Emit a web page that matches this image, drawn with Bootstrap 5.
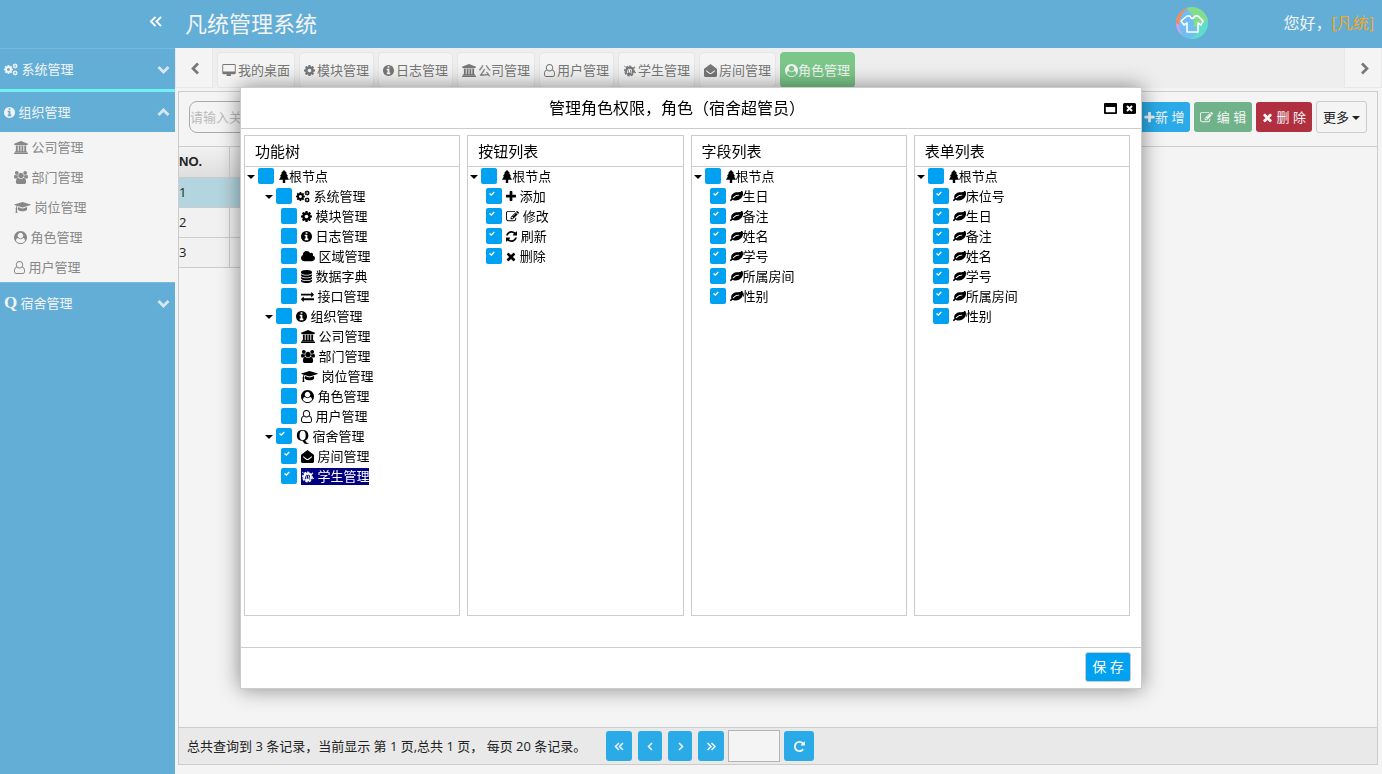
<!DOCTYPE html>
<html lang="zh-CN">
<head>
<meta charset="utf-8">
<meta name="viewport" content="width=device-width, initial-scale=1">
<title>凡统管理系统</title>
<link href="https://cdn.jsdelivr.net/npm/bootstrap@5.3.0/dist/css/bootstrap.min.css" rel="stylesheet">
<style>
body{font-family:"Open Sans","Noto Sans CJK SC",sans-serif;font-size:13px;line-height:20px;color:#222;background:#f4f4f4;overflow:hidden}
a{color:inherit;text-decoration:none}
.btn,.form-control{font-size:13px;line-height:20px}
.ic{height:13px;width:13px;fill:currentColor;vertical-align:-2px;flex:none;overflow:visible}
.i-9{width:10px}.i-11{width:11px}.i-14{width:14px}.i-17{width:17px}
.ln{fill:none;stroke:currentColor}
.q-mark{font:bold 17px/13px "Liberation Serif",serif}
.topbar{height:48px;padding-bottom:2px;background:#62aed6;color:#f4f4f4}
.brand-text{font-size:22px;padding-left:10px}
.side{width:175px;flex:none;background:#62aed6}
.side-head{height:41px;color:#f4f4f4;border-top:1px solid #74b9de;padding:0 5px 0 4px}
.side-head .ln{opacity:.8}
.side-head.active{border-top:3px solid #73f1f0;height:43px}
.side-list{background:#f4f4f4;color:#888}
.side-list a{display:block;line-height:30px;padding-left:14px}
.tabbar{height:40px;background:#eee;color:#777}
.arrow-btn{width:38px;border:1px solid #e8e8e8;border-width:0 1px 1px;background:#f4f4f4;color:#777;padding:0}
.tab-link{border:1px solid #e6e6e6;border-radius:4px;background:#f4f4f4;padding:0 4px;line-height:34px;white-space:nowrap}
.tab-link:not(.active) .ic{margin-right:2px}
.tab-link.active{background:#7ac789;border-color:#7ac789;color:#f4f4f4}
.panel{border:1px solid #ccc;background:#f4f4f4;margin:3px 4px 9px 3px}
.tools{border-bottom:1px solid #ccc;height:55px;padding:0 10px 4px}
.tools .form-control{width:200px;height:32px;padding:0;border:1px solid #aaa;border-radius:8px;background:transparent}
.form-control::placeholder{color:#bbb}
.tool-btn{height:30px;padding:0 6px;border:0;border-radius:3px;color:#f4f4f4}
.c-blue,.c-blue:hover{background:#2aabe8;color:#f4f4f4}
.c-green{background:#70b28a}.c-red{background:#b03040}
.more{height:32px;border:1px solid #ccc;color:#222}
.grid-table{width:60%;margin:0}
.grid-table th,.grid-table td{height:30px;padding:0;border:1px solid #ccc;border-width:0 1px 1px 0;background:#f1f1f1;color:#222;box-shadow:none;vertical-align:middle}
.grid-table th{font-family:"Liberation Sans",sans-serif;background:linear-gradient(#f2f2f2,#dedede)}
.grid-table .picked td{background:#b2d5df}
.no-col{width:50px}
.pager{height:37px;background:#e9e9e9;border-top:1px solid #ccc;padding-left:8px}
.pager-text{margin-right:20px}
.pager-btns{gap:6px}
.pager .tool-btn{width:26px;padding:0}
.pager .form-control{width:52px;height:32px;border:1px solid #b4b4b4;border-radius:0;background:#f4f4f4}
.pager .narrow{width:24px}.pager .wide{width:30px}
.modal{padding-top:2px}
.modal-dialog{max-width:902px;margin:0 auto;min-height:100%}
.modal-content{border:1px solid #ccc;border-radius:0;box-shadow:0 0 20px rgba(0,0,0,.45);color:#000}
.modal-header{height:41px;padding:0 5px;border-color:#ccc;border-radius:0}
.modal-title{font-size:16px;font-weight:400;line-height:24px}
.win-btns{gap:6px}
.win-btn{padding:0;border:0;background:none;line-height:0}
.win-btn .ic{height:11px}
.modal-body{padding:6px 11px 31px 3px;gap:7px}
.tree-box{border:1px solid #ccc;min-height:481px;flex:1 1 0}
.tree-box h2{font-size:15px;font-weight:400;line-height:30px;margin:0;padding-left:10px;border-bottom:1px solid #ccc;height:31px}
.tree-box ul{list-style:none;margin:0;padding:0}
.tree-box ul ul{padding-left:18px}
.node{display:flex;height:20px;align-items:center;white-space:pre}
.node label{line-height:17px;margin-bottom:2px}
.twist{width:13px;height:20px;padding:0 0 0 2px;border:0;background:none;display:flex;align-items:center}
.twist::before,.caret-dn::after{content:"";border:4px solid transparent;border-top-color:#000;border-bottom:0}
.caret-dn::after{display:inline-block;border-top-color:#222;margin-left:3px;vertical-align:2px}
.node input{appearance:none;width:16px;height:16px;margin:0 4px 2px 0;border-radius:2px;background:#00a1f0;flex:none}
.node input.top-node{margin-right:5px}
.node input:checked{background:#00a1f0 url("data:image/svg+xml,%3Csvg xmlns='http://www.w3.org/2000/svg' width='16' height='16' viewBox='0 0 16 16'%3E%3Cpath d='M3.500 5.500l1.800 1.600 3-3' fill='none' stroke='white' stroke-width='1.400'/%3E%3C/svg%3E")}
.chosen{background:#000080;color:#fff;--hole:#000080}
.modal-footer{height:41px;padding:0 10px 2px;border-color:#ccc;border-radius:0}
.modal-footer>*{margin:0}
.save{height:30px;width:46px;padding:0;font-size:14px;border:1px solid #ccc;border-radius:3px;background:#00a1f0;color:#fff}
</style>
</head>
<body>
<svg class="d-none">
<symbol id="cog" viewBox="128 0 1536 1792"><path id="gear" d="M1152 896q0-106-75-181t-181-75-181 75-75 181 75 181 181 75 181-75 75-181zm512-109v222q0 12-8 23t-20 13l-185 28q-19 54-39 91 35 50 107 138 10 12 10 25t-9 23q-27 37-99 108t-94 71q-12 0-26-9l-138-108q-44 23-91 38-16 136-29 186-7 28-36 28h-222q-14 0-24.5-8.5t-11.5-21.5l-28-184q-49-16-90-37l-141 107q-10 9-25 9-14 0-25-11-126-114-165-168-7-10-7-23 0-12 8-23 15-21 51-66.500t54-70.500q-27-50-41-99l-183-27q-13-2-21-12.500t-8-23.500v-222q0-12 8-23t19-13l186-28q14-46 39-92-40-57-107-138-10-12-10-24 0-10 9-23 26-36 98.500-107.500t94.500-71.500q13 0 26 10l138 107q44-23 91-38 16-136 29-186 7-28 36-28h222q14 0 24.500 8.500t11.500 21.500l28 184q49 16 90 37l142-107q9-9 24-9 13 0 25 10 129 119 165 170 7 8 7 22 0 12-8 23-15 21-51 66.500t-54 70.500q26 50 41 98l183 28q13 2 21 12.500t8 23.500z"/></symbol>
<symbol id="cogs" viewBox="0 0 1920 1792"><use href="#gear" transform="translate(-110 180) scale(.8)"/><use href="#gear" transform="translate(1120 0) scale(.46)"/><use href="#gear" transform="translate(1120 960) scale(.46)"/></symbol>
<symbol id="info" viewBox="128 0 1536 1792"><path d="M1152 1376v-160q0-14-9-23t-23-9h-96v-512q0-14-9-23t-23-9h-320q-14 0-23 9t-9 23v160q0 14 9 23t23 9h96v320h-96q-14 0-23 9t-9 23v160q0 14 9 23t23 9h448q14 0 23-9t9-23zm-128-896v-160q0-14-9-23t-23-9h-192q-14 0-23 9t-9 23v160q0 14 9 23t23 9h192q14 0 23-9t9-23zm640 416q0 209-103 385.500t-279.500 279.500-385.500 103-385.500-103-279.500-279.500-103-385.500 103-385.500 279.500-279.500 385.500-103 385.500 103 279.500 279.500 103 385.500z"/></symbol>
<symbol id="bank" viewBox="0 0 1920 1792"><path d="M960 0l960 384v128h-128q0 26-20.500 45t-48.500 19h-1526q-28 0-48.500-19t-20.500-45h-128v-128zm-704 640h256v768h128v-768h256v768h128v-768h256v768h128v-768h256v768h59q28 0 48.500 19t20.500 45v64h-1664v-64q0-26 20.500-45t48.500-19h59v-768zm1595 960q28 0 48.500 19t20.500 45v128h-1920v-128q0-26 20.500-45t48.500-19h1782z"/></symbol>
<symbol id="users" viewBox="0 0 1920 1792"><path d="M593 896q-162 5-265 128h-134q-82 0-138-40.500t-56-118.500q0-353 124-353 6 0 43.500 21t97.500 42.500 119 21.500q67 0 133-23-5 37-5 66 0 139 81 256zm1071 637q0 120-73 189.500t-194 69.500h-874q-121 0-194-69.500t-73-189.500q0-53 3.500-103.500t14-109 26.500-108.500 43-97.500 62-81 85.500-53.500 111.500-20q10 0 43 21.500t73 48 107 48 135 21.500 135-21.500 107-48 73-48 43-21.500q61 0 111.500 20t85.500 53.500 62 81 43 97.500 26.500 108.500 14 109 3.500 103.500zm-1024-1277q0 106-75 181t-181 75-181-75-75-181 75-181 181-75 181 75 75 181zm704 384q0 159-112.500 271.500t-271.500 112.500-271.500-112.500-112.500-271.500 112.500-271.500 271.500-112.500 271.500 112.500 112.500 271.500zm576 225q0 78-56 118.500t-138 40.500h-134q-103-123-265-128 81-117 81-256 0-29-5-66 66 23 133 23 59 0 119-21.500t97.500-42.500 43.500-21q124 0 124 353zm-128-609q0 106-75 181t-181 75-181-75-75-181 75-181 181-75 181 75 75 181z"/></symbol>
<symbol id="cap" viewBox="0 0 2304 1792"><path d="M1774 836l18 316q4 69-82 128t-235 93.500-323 34.500-323-34.500-235-93.500-82-128l18-316 574 181q22 7 48 7t48-7zm530-324q0 23-22 31l-1120 352q-4 1-10 1t-10-1l-652-206q-43 34-71 111.500t-34 178.500q63 36 63 109 0 69-58 107l58 433q2 14-8 25-9 11-24 11h-192q-15 0-24-11-10-11-8-25l58-433q-58-38-58-107 0-73 65-111 11-207 98-330l-333-104q-22-8-22-31t22-31l1120-352q4-1 10-1t10 1l1120 352q22 8 22 31z"/></symbol>
<symbol id="ucircle" viewBox="0 0 1792 1792"><path d="M1523 1339q-22-155-87.500-257.500t-184.500-118.500q-67 74-159.500 115.500t-195.500 41.500-195.500-41.500-159.500-115.500q-119 16-184.500 118.500t-87.500 257.500q106 150 271 237.500t356 87.500 356-87.500 271-237.500zm-243-699q0-159-112.500-271.500t-271.500-112.500-271.500 112.500-112.500 271.500 112.500 271.500 271.500 112.500 271.500-112.500 112.500-271.500zm512 256q0 182-71 347.500t-190.500 286-285.500 191.500-349 71q-182 0-348-71t-286-191-191-286-71-348 71-348 191-286 286-191 348-71 348 71 286 191 191 286 71 348z"/></symbol>
<symbol id="usero" viewBox="0 0 1536 1792"><path d="M1201 784q47 14 89.500 38t89 73 79.500 115.500 55 172 22 236.500q0 154-100 263.500t-241 109.500h-854q-141 0-241-109.500t-100-263.500q0-131 22-236.500t55-172 79.500-115.500 89-73 89.500-38q-79-125-79-272 0-104 40.500-198.500t109.500-163.500 163.500-109.500 198.500-40.500 198.500 40.500 163.500 109.500 109.500 163.500 40.500 198.500q0 147-79 272zm-433-656q-159 0-271.500 112.500t-112.500 271.500 112.500 271.500 271.500 112.500 271.500-112.500 112.500-271.500-112.500-271.500-271.500-112.500zm427 1536q88 0 150.500-71.500t62.500-173.500q0-239-78.500-377t-225.500-145q-145 127-336 127t-336-127q-147 7-225.500 145t-78.500 377q0 102 62.500 173.500t150.500 71.500h854z"/></symbol>
<symbol id="cloud" viewBox="0 0 1920 1792"><path d="M1920 1152q0 159-112.500 271.500t-271.500 112.500h-1088q-185 0-316.500-131.500t-131.500-316.500q0-132 71-241.500t187-163.500q-2-28-2-43 0-212 150-362t362-150q158 0 286.500 88t187.500 230q70-62 166-62 106 0 181 75t75 181q0 75-41 138 129 30 213 134.500t84 239.500z"/></symbol>
<symbol id="db" viewBox="0 0 1536 1792"><path d="M768 768q237 0 443-43t325-127v170q0 69-103 128t-280 93.500-385 34.500-385-34.500-280-93.500-103-128v-170q119 84 325 127t443 43zm0 768q237 0 443-43t325-127v170q0 69-103 128t-280 93.500-385 34.500-385-34.500-280-93.500-103-128v-170q119 84 325 127t443 43zm0-384q237 0 443-43t325-127v170q0 69-103 128t-280 93.500-385 34.500-385-34.500-280-93.500-103-128v-170q119 84 325 127t443 43zm0-1152q208 0 385 34.500t280 93.500 103 128v128q0 69-103 128t-280 93.500-385 34.500-385-34.500-280-93.500-103-128v-128q0-69 103-128t280-93.500 385-34.500z"/></symbol>
<symbol id="swap" viewBox="0 0 1792 1792"><path d="M1792 1184v192q0 13-9.500 22.500t-22.500 9.500h-1376v192q0 13-9.500 22.500t-22.500 9.500q-12 0-24-10l-319-320q-9-9-9-22 0-14 9-23l320-320q9-9 23-9 13 0 22.500 9.500t9.500 22.500v192h1376q13 0 22.500 9.500t9.500 22.500zm0-544q0 14-9 23l-320 320q-9 9-23 9-13 0-22.500-9.500t-9.500-22.500v-192h-1376q-13 0-22.500-9.500t-9.500-22.500v-192q0-13 9.500-22.500t22.500-9.500h1376v-192q0-14 9-23t23-9q12 0 24 10l319 319q9 9 9 23z"/></symbol>
<symbol id="leaf" viewBox="0 0 1792 1792"><path d="M1280 704q0-26-19-45t-45-19q-172 0-318 49.500t-259.500 134-235.500 219.500q-19 21-19 45 0 26 19 45t45 19q24 0 45-19 27-24 74-71t67-66q137-124 268.500-176t313.500-52q26 0 45-19t19-45zm512-198q0 95-20 193-46 224-184.500 383t-357.500 268q-214 108-438 108-148 0-286-47-15-5-88-42t-96-37q-16 0-39.500 32t-45 70-52.500 70-60 32q-43 0-63.500-17.500t-45.500-59.500q-2-4-6-11t-5.500-10-3-9.500-1.500-13.500q0-35 31-73.500t68-65.500 68-56 31-48q0-4-14-38t-16-44q-9-51-9-104 0-115 43.500-220t119-184.500 170.500-139 204-95.500q55-18 145-25.500t179.500-9 178.500-6 163.500-24 113.500-56.500l29.500-29.500 29.500-28 27-20 36.500-16 43.500-4.500q39 0 70.500 46t47.500 112 24 124 8 96z"/></symbol>
<symbol id="plus" viewBox="192 0 1408 1792"><path d="M1600 736v192q0 40-28 68t-68 28h-416v416q0 40-28 68t-68 28h-192q-40 0-68-28t-28-68v-416h-416q-40 0-68-28t-28-68v-192q0-40 28-68t68-28h416v-416q0-40 28-68t68-28h192q40 0 68 28t28 68v416h416q40 0 68 28t28 68z"/></symbol>
<symbol id="times" viewBox="192 0 1408 1792"><path d="M1490 1322q0 40-28 68l-136 136q-28 28-68 28t-68-28l-294-294-294 294q-28 28-68 28t-68-28l-136-136q-28-28-28-68t28-68l294-294-294-294q-28-28-28-68t28-68l136-136q28-28 68-28t68 28l294 294 294-294q28-28 68-28t68 28l136 136q28 28 28 68t-28 68l-294 294 294 294q28 28 28 68z"/></symbol>
<symbol id="edit" viewBox="0 0 1792 1792"><path d="M888 1184l116-116-152-152-116 116v56h96v96h56zm440-720q-16-16-33 1l-350 350q-17 17-1 33t33-1l350-350q17-17 1-33zm80 594v190q0 119-84.500 203.500t-203.500 84.500h-832q-119 0-203.500-84.500t-84.500-203.500v-832q0-119 84.500-203.500t203.500-84.500h832q63 0 117 25 15 7 18 23 3 17-9 29l-49 49q-14 14-32 8-23-6-45-6h-832q-66 0-113 47t-47 113v832q0 66 47 113t113 47h832q66 0 113-47t47-113v-126q0-13 9-22l64-64q15-15 35-7t20 29zm-96-738l288 288-672 672h-288v-288zm444 132l-92 92-288-288 92-92q28-28 68-28t68 28l152 152q28 28 28 68t-28 68z"/></symbol>
<symbol id="sync" viewBox="128 0 1536 1792"><path d="M1639 1056q0 5-1 7-64 268-268 434.500t-478 166.500q-146 0-282.500-55t-243.500-157l-129 129q-19 19-45 19t-45-19-19-45v-448q0-26 19-45t45-19h448q26 0 45 19t19 45-19 45l-137 137q71 66 161 102t187 36q134 0 250-65t186-179q11-17 53-117 8-23 30-23h192q13 0 22.500 9.500t9.500 22.500zm25-800v448q0 26-19 45t-45 19h-448q-26 0-45-19t-19-45 19-45l138-138q-148-137-349-137-134 0-250 65t-186 179q-11 17-53 117-8 23-30 23h-199q-13 0-22.500-9.500t-9.500-22.500v-7q65-268 270-434.500t480-166.500q146 0 284 55.500t245 156.500l130-129q19-19 45-19t45 19 19 45z"/></symbol>
<symbol id="redo" viewBox="128 0 1536 1792"><path d="M1664 256v448q0 26-19 45t-45 19h-448q-42 0-59-40-17-39 14-69l138-138q-148-137-349-137-104 0-198.500 40.500t-163.500 109.500-109.500 163.500-40.500 198.500 40.500 198.500 109.500 163.500 163.500 109.500 198.500 40.500q119 0 225-52t179-147q7-10 23-12 15 0 25 9l137 138q9 8 9.500 20.500t-7.500 22.500q-109 132-264 204.500t-327 72.500q-156 0-298-61t-245-164-164-245-61-298 61-298 164-245 245-164 298-61q147 0 284.500 55.500t244.500 156.500l130-129q29-31 70-14 39 17 39 59z"/></symbol>
<symbol id="desk" viewBox="0 0 1856 1792"><path d="M1728 992v-832q0-13-9.500-22.500t-22.500-9.500h-1536q-13 0-22.500 9.500t-9.500 22.500v832q0 13 9.500 22.500t22.500 9.500h1536q13 0 22.500-9.500t9.500-22.500zm128-832v1088q0 66-47 113t-113 47h-544q0 37 16 77.500t32 71 16 43.500q0 26-19 45t-45 19h-512q-26 0-45-19t-19-45q0-14 16-44t32-70 16-78h-480q-66 0-113-47t-47-113v-1088q0-66 47-113t113-47h1536q66 0 113 47t47 113z"/></symbol>
<symbol id="mail" viewBox="0 0 14 14"><path fill-rule="evenodd" d="M7 0l6.500 4.800q.5.400.5 1V12.500q0 1.500-1.500 1.500h-11Q0 14 0 12.500V5.800q0-.6.500-1zM2 7.600l3.600 2.800q1.400 1 2.800 0L12 7.600l-.6-.8-3.600 2.700q-.8.500-1.600 0L2.600 6.800z"/></symbol>
<symbol id="meet" viewBox="0 0 14 14"><circle cx="7" cy="7.500" r="4.800"/><circle class="ln" cx="7" cy="7.500" r="5.200" fill="none" stroke-width="1.400" stroke-dasharray="2.600 1.300"/><circle cx="2" cy="2.500" r=".7"/><circle cx="12.500" cy="3.500" r=".7"/><circle cx="13.500" cy="9" r=".6"/><path d="M4.500 10l1.100-4q.8-1.200 1.600 0L6.700 9.200l.5-3q1.400-1.600 2 0l-.6 3q.2 1 1.300.5" fill="none" style="stroke:var(--hole,#fff)" stroke-width="1"/></symbol>
<symbol id="tree" viewBox="0 0 10 13"><path d="M5 0l3.200 3.300H7l2.200 3H8l2 3.500H6.200V13H3.800V9.800H0l2-3.500H.8l2.200-3H1.800z"/></symbol>
<symbol id="max" viewBox="0 0 13 11"><path fill-rule="evenodd" d="M1 0h11q1 0 1 1v9q0 1-1 1H1q-1 0-1-1V1q0-1 1-1zm.8 4v5.200h9.400V4z"/></symbol>
<symbol id="close" viewBox="0 0 13 11"><rect width="13" height="11" rx="1.500"/><path d="M4 3l5 5M9 3L4 8" stroke="#fff" stroke-width="2"/></symbol>
</svg>

<div class="d-flex flex-column vh-100">
<header class="topbar d-flex align-items-center">
  <div class="side text-end pe-2"><button class="btn p-0 border-0 text-white me-1 pb-1" aria-label="折叠菜单"><svg class="ic ln i-14" viewBox="0 0 15 14" stroke-width="2"><path d="M7 2L2 7l5 5M13 2L8 7l5 5"/></svg></button></div>
  <div class="brand-text">凡统管理系统</div>
  <div class="ms-auto d-flex align-items-center pe-2 fs-6">
    <svg class="me-5" width="32" height="32" viewBox="0 0 32 32"><defs><clipPath id="disc"><circle cx="16" cy="16" r="16"/></clipPath></defs><g clip-path="url(#disc)"><path fill="#6fbdf2" d="M0 0h32v32H0z"/><path fill="#f58a5c" d="M0 17V0h13Q4 6 3 17z"/><path fill="#c9a0ee" d="M0 17h3q0 5 3 10l-6 2z"/><path fill="#84dd8e" d="M11 0h21v15l-15 6q4-10-6-19z"/><path fill="#5fdccb" d="M32 13v19H14q9-5 9-14z"/></g><path d="M11 9l-6 5 3 4 3-2v9h11v-9l3 2 2-4-5-5h-3q-3 5-5 0z" fill="none" stroke="#fff" stroke-width="1.600" stroke-linejoin="round"/></svg>
    <span class="ms-4 ps-1">您好，<a href="#" style="color:#f5a623">[凡统]</a></span>
  </div>
</header>
<div class="d-flex flex-grow-1">
  <nav class="side">
    <a href="#" class="side-head d-flex align-items-center justify-content-between"><span><svg class="ic i-14"><use href="#cogs"/></svg> 系统管理</span><svg class="ic ln" viewBox="0 0 13 13" stroke-width="3"><path d="M1.500 4l5 5 5-5"/></svg></a>
    <a href="#" class="side-head active d-flex align-items-center justify-content-between"><span><svg class="ic i-11"><use href="#info"/></svg> 组织管理</span><svg class="ic ln" viewBox="0 0 13 13" stroke-width="3"><path d="M1.500 9l5-5 5 5"/></svg></a>
    <div class="side-list">
      <a href="#"><svg class="ic i-14"><use href="#bank"/></svg> 公司管理</a>
      <a href="#"><svg class="ic i-14"><use href="#users"/></svg> 部门管理</a>
      <a href="#"><svg class="ic i-17"><use href="#cap"/></svg> 岗位管理</a>
      <a href="#"><svg class="ic"><use href="#ucircle"/></svg> 角色管理</a>
      <a href="#"><svg class="ic i-11"><use href="#usero"/></svg> 用户管理</a>
    </div>
    <a href="#" class="side-head d-flex align-items-center justify-content-between"><span><span class="q-mark">Q</span> 宿舍管理</span><svg class="ic ln" viewBox="0 0 13 13" stroke-width="3"><path d="M1.500 4l5 5 5-5"/></svg></a>
  </nav>
  <main class="flex-grow-1 d-flex flex-column">
    <div class="tabbar d-flex">
      <button class="arrow-btn" aria-label="向左"><svg class="ic ln" viewBox="0 0 13 13" stroke-width="2.600"><path d="M10 1.500l-5 5 5 5"/></svg></button>
      <div class="d-flex gap-1 pt-1 ms-1">
        <a class="tab-link" href="#"><svg class="ic i-14"><use href="#desk"/></svg>我的桌面</a>
        <a class="tab-link" href="#"><svg class="ic i-11"><use href="#cog"/></svg>模块管理</a>
        <a class="tab-link" href="#"><svg class="ic i-11"><use href="#info"/></svg>日志管理</a>
        <a class="tab-link" href="#"><svg class="ic i-14"><use href="#bank"/></svg>公司管理</a>
        <a class="tab-link" href="#"><svg class="ic i-11"><use href="#usero"/></svg>用户管理</a>
        <a class="tab-link" href="#"><svg class="ic"><use href="#meet"/></svg>学生管理</a>
        <a class="tab-link" href="#"><svg class="ic"><use href="#mail"/></svg>房间管理</a>
        <a class="tab-link active" href="#"><svg class="ic"><use href="#ucircle"/></svg>角色管理</a>
      </div>
      <button class="arrow-btn ms-auto" aria-label="向右"><svg class="ic ln" viewBox="0 0 13 13" stroke-width="2.600"><path d="M5 1.500l5 5-5 5"/></svg></button>
    </div>
    <section class="panel flex-grow-1 d-flex flex-column">
      <div class="tools d-flex align-items-center gap-1">
        <input class="form-control me-auto" type="text" placeholder="请输入关" aria-label="请输入关键字">
        <button class="btn tool-btn c-blue"><svg class="ic i-11"><use href="#plus"/></svg>新 增</button>
        <button class="btn tool-btn c-green"><svg class="ic"><use href="#edit"/></svg> 编 辑</button>
        <button class="btn tool-btn c-red"><svg class="ic i-11"><use href="#times"/></svg> 删 除</button>
        <button class="btn tool-btn more caret-dn">更多</button>
      </div>
      <table class="table grid-table">
        <thead><tr><th class="no-col">NO.</th><th></th></tr></thead>
        <tbody><tr class="picked"><td>1</td><td></td></tr><tr><td>2</td><td></td></tr><tr><td>3</td><td></td></tr></tbody>
      </table>
      <div class="pager d-flex align-items-center mt-auto">
        <span class="pager-text">总共查询到 3 条记录，当前显示 第 1 页,总共 1 页， 每页 20 条记录。</span>
        <div class="pager-btns d-flex align-items-center">
          <button class="btn tool-btn c-blue" aria-label="首页"><svg class="ic ln" viewBox="0 0 13 13" stroke-width="1.500"><path d="M6 3L2.500 6.500 6 10M10 3L6.500 6.500 10 10"/></svg></button>
          <button class="btn tool-btn c-blue narrow" aria-label="上一页"><svg class="ic ln" viewBox="0 0 13 13" stroke-width="1.500"><path d="M8 3L4.500 6.500 8 10"/></svg></button>
          <button class="btn tool-btn c-blue narrow" aria-label="下一页"><svg class="ic ln" viewBox="0 0 13 13" stroke-width="1.500"><path d="M5 3l3.500 3.500L5 10"/></svg></button>
          <button class="btn tool-btn c-blue" aria-label="末页"><svg class="ic ln" viewBox="0 0 13 13" stroke-width="1.500"><path d="M2.500 3L6 6.500 2.500 10M6.500 3L10 6.500 6.500 10"/></svg></button>
        </div>
        <input class="form-control mx-1" type="text" aria-label="页码">
        <button class="btn tool-btn c-blue wide" aria-label="刷新"><svg class="ic i-11"><use href="#redo"/></svg></button>
      </div>
    </section>
  </main>
</div>
</div>

<div class="modal show d-block" role="dialog" aria-labelledby="dlgTitle">
<div class="modal-dialog modal-dialog-centered">
<div class="modal-content">
  <div class="modal-header">
    <h1 class="modal-title flex-grow-1 text-center ps-1" id="dlgTitle">管理角色权限，角色（宿舍超管员）</h1>
    <div class="win-btns d-flex">
      <button class="win-btn" aria-label="最大化"><svg class="ic"><use href="#max"/></svg></button>
      <button class="win-btn" aria-label="关闭"><svg class="ic"><use href="#close"/></svg></button>
    </div>
  </div>
  <div class="modal-body d-flex">
    <div class="tree-box"><h2>功能树</h2>
      <ul><li><div class="node"><button class="twist" aria-label="展开"></button><input type="checkbox" class="top-node" id="a0"><label for="a0"><svg class="ic i-9"><use href="#tree"/></svg>根节点</label></div>
      <ul>
        <li><div class="node"><button class="twist" aria-label="展开"></button><input type="checkbox" id="a1"><label for="a1"><svg class="ic i-14"><use href="#cogs"/></svg> 系统管理</label></div>
        <ul>
          <li class="node"><input type="checkbox" id="a2"><label for="a2"><svg class="ic i-11"><use href="#cog"/></svg> 模块管理</label></li>
          <li class="node"><input type="checkbox" id="a3"><label for="a3"><svg class="ic i-11"><use href="#info"/></svg> 日志管理</label></li>
          <li class="node"><input type="checkbox" id="a4"><label for="a4"><svg class="ic i-14"><use href="#cloud"/></svg> 区域管理</label></li>
          <li class="node"><input type="checkbox" id="a5"><label for="a5"><svg class="ic i-11"><use href="#db"/></svg> 数据字典</label></li>
          <li class="node"><input type="checkbox" id="a6"><label for="a6"><svg class="ic"><use href="#swap"/></svg> 接口管理</label></li>
        </ul></li>
        <li><div class="node"><button class="twist" aria-label="展开"></button><input type="checkbox" id="a7"><label for="a7"><svg class="ic i-11"><use href="#info"/></svg> 组织管理</label></div>
        <ul>
          <li class="node"><input type="checkbox" id="a8"><label for="a8"><svg class="ic i-14"><use href="#bank"/></svg> 公司管理</label></li>
          <li class="node"><input type="checkbox" id="a9"><label for="a9"><svg class="ic i-14"><use href="#users"/></svg> 部门管理</label></li>
          <li class="node"><input type="checkbox" id="a10"><label for="a10"><svg class="ic i-17"><use href="#cap"/></svg> 岗位管理</label></li>
          <li class="node"><input type="checkbox" id="a11"><label for="a11"><svg class="ic"><use href="#ucircle"/></svg> 角色管理</label></li>
          <li class="node"><input type="checkbox" id="a12"><label for="a12"><svg class="ic i-11"><use href="#usero"/></svg> 用户管理</label></li>
        </ul></li>
        <li><div class="node"><button class="twist" aria-label="展开"></button><input type="checkbox" id="a13" checked><label for="a13"><span class="q-mark">Q</span> 宿舍管理</label></div>
        <ul>
          <li class="node"><input type="checkbox" id="a14" checked><label for="a14"><svg class="ic"><use href="#mail"/></svg> 房间管理</label></li>
          <li class="node"><input type="checkbox" id="a15" checked><label for="a15" class="chosen"><svg class="ic"><use href="#meet"/></svg> 学生管理</label></li>
        </ul></li>
      </ul></li></ul>
    </div>
    <div class="tree-box"><h2>按钮列表</h2>
      <ul><li><div class="node"><button class="twist" aria-label="展开"></button><input type="checkbox" class="top-node" id="b0"><label for="b0"><svg class="ic i-9"><use href="#tree"/></svg>根节点</label></div>
      <ul>
        <li class="node"><input type="checkbox" id="b1" checked><label for="b1"><svg class="ic i-9"><use href="#plus"/></svg> 添加</label></li>
        <li class="node"><input type="checkbox" id="b2" checked><label for="b2"><svg class="ic"><use href="#edit"/></svg> 修改</label></li>
        <li class="node"><input type="checkbox" id="b3" checked><label for="b3"><svg class="ic i-11"><use href="#sync"/></svg> 刷新</label></li>
        <li class="node"><input type="checkbox" id="b4" checked><label for="b4"><svg class="ic i-9"><use href="#times"/></svg> 删除</label></li>
      </ul></li></ul>
    </div>
    <div class="tree-box"><h2>字段列表</h2>
      <ul><li><div class="node"><button class="twist" aria-label="展开"></button><input type="checkbox" class="top-node" id="c0"><label for="c0"><svg class="ic i-9"><use href="#tree"/></svg>根节点</label></div>
      <ul>
        <li class="node"><input type="checkbox" id="c1" checked><label for="c1"><svg class="ic"><use href="#leaf"/></svg>生日</label></li>
        <li class="node"><input type="checkbox" id="c2" checked><label for="c2"><svg class="ic"><use href="#leaf"/></svg>备注</label></li>
        <li class="node"><input type="checkbox" id="c3" checked><label for="c3"><svg class="ic"><use href="#leaf"/></svg>姓名</label></li>
        <li class="node"><input type="checkbox" id="c4" checked><label for="c4"><svg class="ic"><use href="#leaf"/></svg>学号</label></li>
        <li class="node"><input type="checkbox" id="c5" checked><label for="c5"><svg class="ic"><use href="#leaf"/></svg>所属房间</label></li>
        <li class="node"><input type="checkbox" id="c6" checked><label for="c6"><svg class="ic"><use href="#leaf"/></svg>性别</label></li>
      </ul></li></ul>
    </div>
    <div class="tree-box"><h2>表单列表</h2>
      <ul><li><div class="node"><button class="twist" aria-label="展开"></button><input type="checkbox" class="top-node" id="d0"><label for="d0"><svg class="ic i-9"><use href="#tree"/></svg>根节点</label></div>
      <ul>
        <li class="node"><input type="checkbox" id="d1" checked><label for="d1"><svg class="ic"><use href="#leaf"/></svg>床位号</label></li>
        <li class="node"><input type="checkbox" id="d2" checked><label for="d2"><svg class="ic"><use href="#leaf"/></svg>生日</label></li>
        <li class="node"><input type="checkbox" id="d3" checked><label for="d3"><svg class="ic"><use href="#leaf"/></svg>备注</label></li>
        <li class="node"><input type="checkbox" id="d4" checked><label for="d4"><svg class="ic"><use href="#leaf"/></svg>姓名</label></li>
        <li class="node"><input type="checkbox" id="d5" checked><label for="d5"><svg class="ic"><use href="#leaf"/></svg>学号</label></li>
        <li class="node"><input type="checkbox" id="d6" checked><label for="d6"><svg class="ic"><use href="#leaf"/></svg>所属房间</label></li>
        <li class="node"><input type="checkbox" id="d7" checked><label for="d7"><svg class="ic"><use href="#leaf"/></svg>性别</label></li>
      </ul></li></ul>
    </div>
  </div>
  <div class="modal-footer"><button class="btn save">保 存</button></div>
</div>
</div>
</div>
<script src="https://cdn.jsdelivr.net/npm/bootstrap@5.3.0/dist/js/bootstrap.bundle.min.js"></script>
</body>
</html>
